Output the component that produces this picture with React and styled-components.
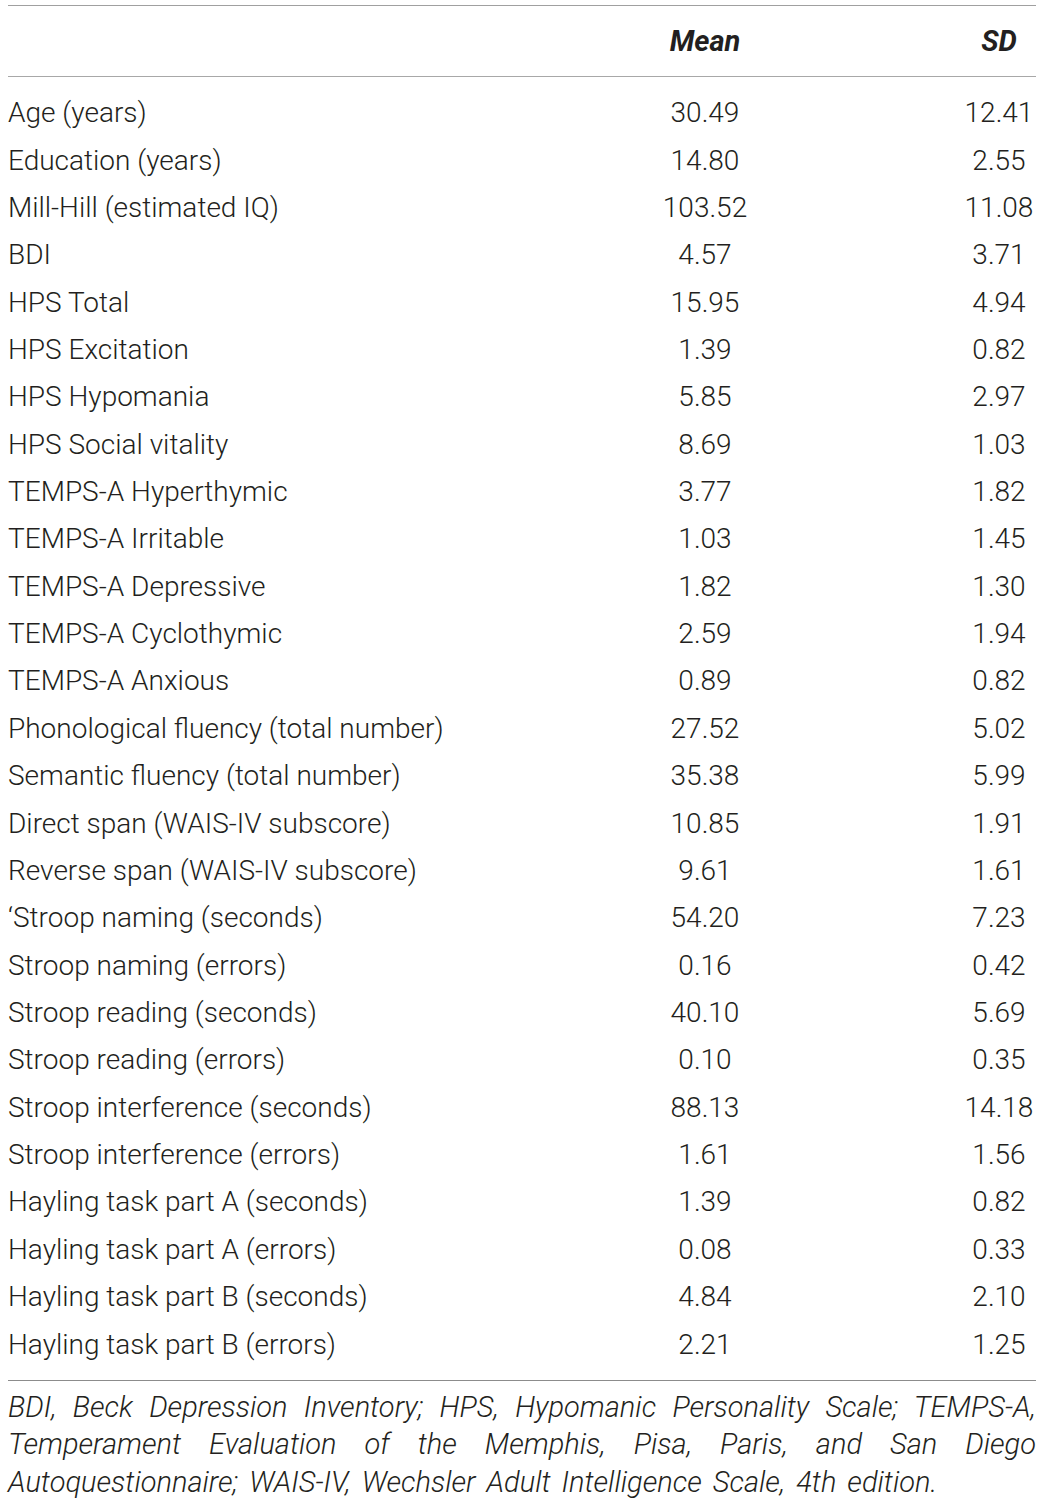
import styled, { createGlobalStyle } from 'styled-components';

const rows = [
  ['Age (years)', '30.49', '12.41'],
  ['Education (years)', '14.80', '2.55'],
  ['Mill-Hill (estimated IQ)', '103.52', '11.08'],
  ['BDI', '4.57', '3.71'],
  ['HPS Total', '15.95', '4.94'],
  ['HPS Excitation', '1.39', '0.82'],
  ['HPS Hypomania', '5.85', '2.97'],
  ['HPS Social vitality', '8.69', '1.03'],
  ['TEMPS-A Hyperthymic', '3.77', '1.82'],
  ['TEMPS-A Irritable', '1.03', '1.45'],
  ['TEMPS-A Depressive', '1.82', '1.30'],
  ['TEMPS-A Cyclothymic', '2.59', '1.94'],
  ['TEMPS-A Anxious', '0.89', '0.82'],
  ['Phonological fluency (total number)', '27.52', '5.02'],
  ['Semantic fluency (total number)', '35.38', '5.99'],
  ['Direct span (WAIS-IV subscore)', '10.85', '1.91'],
  ['Reverse span (WAIS-IV subscore)', '9.61', '1.61'],
  ['‘Stroop naming (seconds)', '54.20', '7.23'],
  ['Stroop naming (errors)', '0.16', '0.42'],
  ['Stroop reading (seconds)', '40.10', '5.69'],
  ['Stroop reading (errors)', '0.10', '0.35'],
  ['Stroop interference (seconds)', '88.13', '14.18'],
  ['Stroop interference (errors)', '1.61', '1.56'],
  ['Hayling task part A (seconds)', '1.39', '0.82'],
  ['Hayling task part A (errors)', '0.08', '0.33'],
  ['Hayling task part B (seconds)', '4.84', '2.10'],
  ['Hayling task part B (errors)', '2.21', '1.25'],
];

const GlobalStyle = createGlobalStyle`
  body {
    margin: 0;
    background: #fff;
    font-family: Roboto, "Liberation Sans", Arial, sans-serif;
    font-weight: 300;
    color: #231f20;
  }
`;

const Page = styled.div`
  width: 1028px;
  padding: 5px 6px 0 8px;
`;

const Table = styled.div`
  border-top: 1.5px solid #a0a0a0;
  border-bottom: 1.5px solid #8c8c8c;
`;

const Row = styled.div`
  display: grid;
  grid-template-columns: 1fr 180px 241px;
  align-items: center;
  height: ${(p) => (p.$head ? '70px' : '47.37px')};
  font-size: ${(p) => (p.$head ? '29px' : '28px')};
  font-weight: ${(p) => (p.$head ? 700 : 300)};
  font-style: ${(p) => (p.$head ? 'italic' : 'normal')};
  border-bottom: ${(p) => (p.$head ? '1.5px solid #a8a8a8' : 'none')};
`;

const Body = styled.div`
  padding: 12px 0;
`;

const Label = styled.div`
  white-space: nowrap;
`;

const Mean = styled.div`
  text-align: center;
`;

const Sd = styled.div`
  justify-self: end;
  width: 74px;
  text-align: center;
`;

const Note = styled.p`
  margin: 0;
  padding-top: 8px;
  font-size: 29px;
  word-spacing: 4px;
  font-style: italic;
  line-height: 37.5px;
  text-align: justify;
`;

export default function App() {
  return (
    <Page>
      <GlobalStyle />
      <Table>
        <Row $head>
          <Label />
          <Mean>Mean</Mean>
          <Sd>SD</Sd>
        </Row>
        <Body>
          {rows.map(([label, mean, sd]) => (
            <Row key={label}>
              <Label>{label}</Label>
              <Mean>{mean}</Mean>
              <Sd>{sd}</Sd>
            </Row>
          ))}
        </Body>
      </Table>
      <Note>
        BDI, Beck Depression Inventory; HPS, Hypomanic Personality Scale; TEMPS-A, Temperament
        Evaluation of the Memphis, Pisa, Paris, and San Diego Autoquestionnaire; WAIS-IV, Wechsler
        Adult Intelligence Scale, 4th edition.
      </Note>
    </Page>
  );
}
